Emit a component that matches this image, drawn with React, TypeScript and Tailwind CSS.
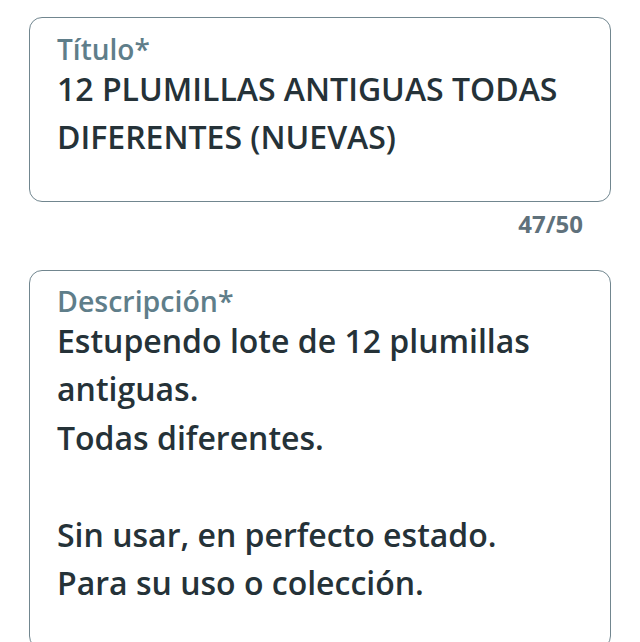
import React from "react";

export default function App() {
  return (
    <div className="w-[640px] h-[642px] overflow-hidden bg-white px-[29px] pt-[17px] font-['Open_Sans',sans-serif]">
      <div className="rounded-[13px] border-[1.5px] border-[#71868f] pl-[27px] pr-[20px] pt-[14.5px] pb-[40px]">
        <div className="text-[28px] leading-[32px] font-semibold text-[#5f7e8a]">Título*</div>
        <div className="text-[32px] leading-[48px] font-semibold text-[#253238]">
          12 PLUMILLAS ANTIGUAS TODAS DIFERENTES (NUEVAS)
        </div>
      </div>
      <div className="flex justify-end pr-[28px] pt-[7px] text-[24px] leading-[30px] font-bold text-[#5f717b]">
        47/50
      </div>
      <div className="mt-[31.5px] rounded-[13px] border-[1.5px] border-[#71868f] pl-[27px] pr-[20px] pt-[13.5px] pb-[40px]">
        <div className="text-[28.5px] leading-[32px] font-semibold text-[#5f7e8a]">Descripción*</div>
        <div className="whitespace-pre-line text-[32px] leading-[48.5px] font-semibold text-[#253238]">
          {"Estupendo lote de 12 plumillas antiguas.\nTodas diferentes.\n\nSin usar, en perfecto estado.\nPara su uso o colección."}
        </div>
      </div>
    </div>
  );
}
